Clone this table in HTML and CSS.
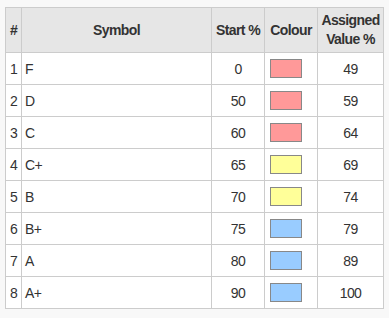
FILE: index.html
```html
<!DOCTYPE html>
<html>
<head>
<meta charset="utf-8">
<link rel="stylesheet" href="styles.css">
</head>
<body>
<table class="grades">
<colgroup>
<col class="c-num"><col class="c-sym"><col class="c-start"><col class="c-col"><col class="c-val">
</colgroup>
<thead>
<tr><th>#</th><th>Symbol</th><th>Start %</th><th>Colour</th><th>Assigned Value %</th></tr>
</thead>
<tbody>
<tr><td class="num">1</td><td class="sym">F</td><td>0</td><td class="swc"><span class="sw red"></span></td><td>49</td></tr>
<tr><td class="num">2</td><td class="sym">D</td><td>50</td><td class="swc"><span class="sw red"></span></td><td>59</td></tr>
<tr><td class="num">3</td><td class="sym">C</td><td>60</td><td class="swc"><span class="sw red"></span></td><td>64</td></tr>
<tr><td class="num">4</td><td class="sym">C+</td><td>65</td><td class="swc"><span class="sw yellow"></span></td><td>69</td></tr>
<tr><td class="num">5</td><td class="sym">B</td><td>70</td><td class="swc"><span class="sw yellow"></span></td><td>74</td></tr>
<tr><td class="num">6</td><td class="sym">B+</td><td>75</td><td class="swc"><span class="sw blue"></span></td><td>79</td></tr>
<tr><td class="num">7</td><td class="sym">A</td><td>80</td><td class="swc"><span class="sw blue"></span></td><td>89</td></tr>
<tr><td class="num">8</td><td class="sym">A+</td><td>90</td><td class="swc"><span class="sw blue"></span></td><td>100</td></tr>
</tbody>
</table>
</body>
</html>
```
FILE: styles.css
```css
html, body {
  margin: 0;
  background: #f8f8f8;
}
body {
  padding: 7px 0 0 5px;
  font-family: "Liberation Sans", Arial, sans-serif;
  font-size: 14px;
  letter-spacing: -0.6px;
  color: #333;
}
.grades {
  border-collapse: collapse;
  table-layout: fixed;
  width: 379px;
  background: #fff;
}
.c-num { width: 16px; }
.c-sym { width: 190px; }
.c-start { width: 53px; }
.c-col { width: 53px; }
.c-val { width: 66px; }
.grades th, .grades td {
  border: 1px solid #ccc;
  padding: 0;
  text-align: center;
}
.grades th {
  background: #e6e6e6;
  font-weight: bold;
  letter-spacing: -0.6px;
  height: 44px;
  line-height: 19px;
}
.grades td {
  height: 31px;
}
.grades td.sym {
  text-align: left;
  padding-left: 3px;
}
.grades td.swc {
  text-align: left;
  padding-left: 5px;
  line-height: 0;
}
.sw {
  display: inline-block;
  width: 30px;
  height: 17px;
  border: 1px solid #888;
  vertical-align: middle;
}
.red { background: #ff9999; }
.yellow { background: #ffff99; }
.blue { background: #99ccff; }
```
